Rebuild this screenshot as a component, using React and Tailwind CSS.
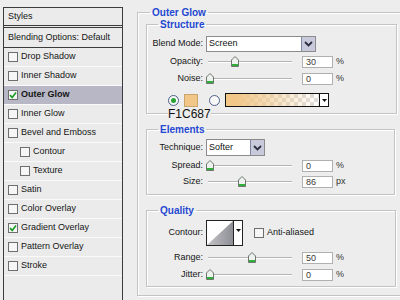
import React from "react";

const layers = [
  {name: "Drop Shadow"},
  {name: "Inner Shadow"},
  {name: "Outer Glow", checked: true, active: true},
  {name: "Inner Glow"},
  {name: "Bevel and Emboss"},
  {name: "Contour", sub: true},
  {name: "Texture", sub: true},
  {name: "Satin"},
  {name: "Color Overlay"},
  {name: "Gradient Overlay", checked: true},
  {name: "Pattern Overlay"},
  {name: "Stroke"},
];

function Check({checked}) {
  return (
      <span className="w-[10px] h-[10px] border border-[#6e6e6e] bg-[#f6f6f6] flex items-center justify-center shrink-0">
        {checked &&
            <svg width="8" height="8" viewBox="0 0 8 8">
              <path d="M1 4.2 L3.2 6.4 L7 1.4" stroke="#1f9e27" strokeWidth="1.7" fill="none"/>
            </svg>}
      </span>
  )
}

function Thumb() {
  return (
      <svg width="8" height="11" viewBox="0 0 8 11">
        <path d="M0.5 4 L4 0.5 L7.5 4 V10.5 H0.5 Z" fill="#eef2ee" stroke="#6f756f"/>
        <rect x="1" y="8" width="6" height="2" fill="#2fae3a"/>
      </svg>
  )
}

function Slider({pos}) {
  return (
      <div className="relative w-[88px] h-[12px] shrink-0">
        <div className="absolute left-[2px] right-[2px] top-[5px] h-[2px] border-t border-[#b4b4b4] border-b border-b-white"/>
        <div className="absolute top-[0px]" style={{left: pos}}>
          <Thumb/>
        </div>
      </div>
  )
}

function Value({value, unit}) {
  return (
      <>
        <div className="w-[31px] h-[12px] bg-white border border-[#b0b0b0] pl-[3px] text-[#3c3a36] leading-[10px] shrink-0">{value}</div>
        <span className="ml-[3px] text-[#333]">{unit}</span>
      </>
  )
}

function Label({children}) {
  return <div className="w-[56px] text-right shrink-0 mr-[3px]">{children}</div>
}

function SliderRow({label, pos, value, unit, className}) {
  return (
      <div className={"flex items-center h-[12px] " + className}>
        <Label>{label}</Label>
        <Slider pos={pos}/>
        <div className="w-[8px]"/>
        <Value value={value} unit={unit}/>
      </div>
  )
}

function Chevron() {
  return (
      <svg width="9" height="6" viewBox="0 0 9 6">
        <path d="M1 1 L4.5 4.5 L8 1" stroke="#2a2e40" strokeWidth="1.8" fill="none"/>
      </svg>
  )
}

function Select({value, className}) {
  return (
      <div className={"flex bg-white border border-[#8b8b8b] " + className}>
        <div className="flex-1 pl-[2px] flex items-center">{value}</div>
        <div className="w-[14px] bg-[#c8cadb] border-l border-[#7f86a6] flex items-center justify-center">
          <Chevron/>
        </div>
      </div>
  )
}

function Radio({on}) {
  return (
      <span className="w-[11px] h-[11px] rounded-full border border-[#4d5f86] bg-[#f8f8f8] flex items-center justify-center shrink-0">
        {on && <span className="w-[5px] h-[5px] rounded-full bg-[#2aa336]"/>}
      </span>
  )
}

function Arrow() {
  return (
      <svg width="5" height="3" viewBox="0 0 5 3">
        <path d="M0 0 H5 L2.5 3 Z" fill="#111"/>
      </svg>
  )
}

function Group({title, className, children}) {
  return (
      <fieldset className={"border border-[#c3c3c3] shadow-[inset_1px_1px_0_#fff,1px_1px_0_#fff] min-w-0 " + className}>
        <legend className="ml-[11px] px-[2px] font-bold text-[10px] leading-[13px] text-[#2448d0]">{title}</legend>
        {children}
      </fieldset>
  )
}

export default function App() {
  return (
      <div className="w-[400px] h-[300px] bg-[#ededed] flex overflow-hidden font-['Liberation_Sans',Arial,sans-serif] text-[9px] text-[#151515]">
        {/* styles list */}
        <div className="ml-[3px] mt-[7px] w-[120px] shrink-0 border-t border-x border-[#3c3c3c] bg-[#ebebeb]">
          <div className="h-[20px] pl-[4px] flex items-center border-b-[3px] border-double border-[#3c3c3c]">Styles</div>
          <div className="h-[20px] pl-[4px] flex items-center border-b border-[#3c3c3c]">Blending Options: Default</div>
          {layers.map((l) => (
              <div key={l.name}
                   className={"h-[19px] flex items-center gap-[3px] border-b border-[#fafafa] " + (l.sub ? "pl-[16px] " : "pl-[4px] ") + (l.active ? "bg-[#b7b7c5] font-bold" : "")}>
                <Check checked={l.checked}/>
                <span>{l.name}</span>
              </div>
          ))}
        </div>

        {/* outer glow options */}
        <div className="ml-[14px]">
          <fieldset className="mt-[6px] w-[290px] border border-[#c3c3c3] shadow-[inset_1px_1px_0_#fff,1px_1px_0_#fff] pl-[8px] pb-[8px]">
            <legend className="ml-[4px] px-[2px] font-bold text-[10px] leading-[13px] text-[#2448d0]">Outer Glow</legend>

            <Group title="Structure" className="-mt-[1px] w-[251px] pb-[6px]">
              <div className="flex items-center h-[16px] mt-[5px]">
                <Label>Blend Mode:</Label>
                <Select value="Screen" className="w-[110px] h-[16px]"/>
              </div>
              <SliderRow label="Opacity:" pos="25px" value="30" unit="%" className="mt-[4px]"/>
              <SliderRow label="Noise:" pos="0px" value="0" unit="%" className="mt-[5px]"/>
              <div className="flex items-center h-[14px] mt-[8px] pl-[21px]">
                <Radio on/>
                <span className="ml-[5px] w-[14px] h-[13px] bg-[#F1C687] border border-[#c9a66e]"/>
                <span className="ml-[11px]"><Radio/></span>
                <div className="ml-[5px] w-[104px] h-[14px] flex border border-[#111]">
                  <div className="flex-1 bg-[repeating-conic-gradient(#dedede_0_25%,#ffffff_0_50%)] bg-[length:8px_8px]">
                    <div className="w-full h-full bg-[linear-gradient(to_right,#F1C687_10%,rgba(241,198,135,0))]"/>
                  </div>
                  <div className="w-[9px] border-l border-[#111] bg-white flex items-center justify-center">
                    <Arrow/>
                  </div>
                </div>
              </div>
            </Group>

            <div className="-mt-[6px] ml-[22px] w-fit bg-[#ededed] text-[12px] leading-[13px] text-[#111]">F1C687</div>

            <Group title="Elements" className="mt-[2px] w-[249px] pb-[6px]">
              <div className="flex items-center h-[17px] mt-[3px]">
                <Label>Technique:</Label>
                <Select value="Softer" className="w-[59px] h-[17px]"/>
              </div>
              <SliderRow label="Spread:" pos="0px" value="0" unit="%" className="mt-[4px]"/>
              <SliderRow label="Size:" pos="32px" value="86" unit="px" className="mt-[4px]"/>
            </Group>

            <Group title="Quality" className="mt-[9px] w-[250px] pb-[5px]">
              <div className="flex items-center h-[26px] mt-[3px]">
                <Label>Contour:</Label>
                <div className="flex w-[37px] h-[26px] border border-[#222] bg-white">
                  <svg width="26" height="24" viewBox="0 0 26 24">
                    <defs>
                      <linearGradient id="cg" x1="0" y1="0" x2="1" y2="0">
                        <stop offset="0" stopColor="#c4c4c8"/>
                        <stop offset="1" stopColor="#8e8e96"/>
                      </linearGradient>
                    </defs>
                    <path d="M0 24 L26 0 V24 Z" fill="url(#cg)"/>
                  </svg>
                  <div className="flex-1 border-l border-[#222] flex justify-center pt-[8px]">
                    <Arrow/>
                  </div>
                </div>
                <span className="ml-[11px]"><Check/></span>
                <span className="ml-[3px]">Anti-aliased</span>
              </div>
              <SliderRow label="Range:" pos="42px" value="50" unit="%" className="mt-[6px]"/>
              <SliderRow label="Jitter:" pos="0px" value="0" unit="%" className="mt-[5px]"/>
            </Group>
          </fieldset>
        </div>
      </div>
  )
}
